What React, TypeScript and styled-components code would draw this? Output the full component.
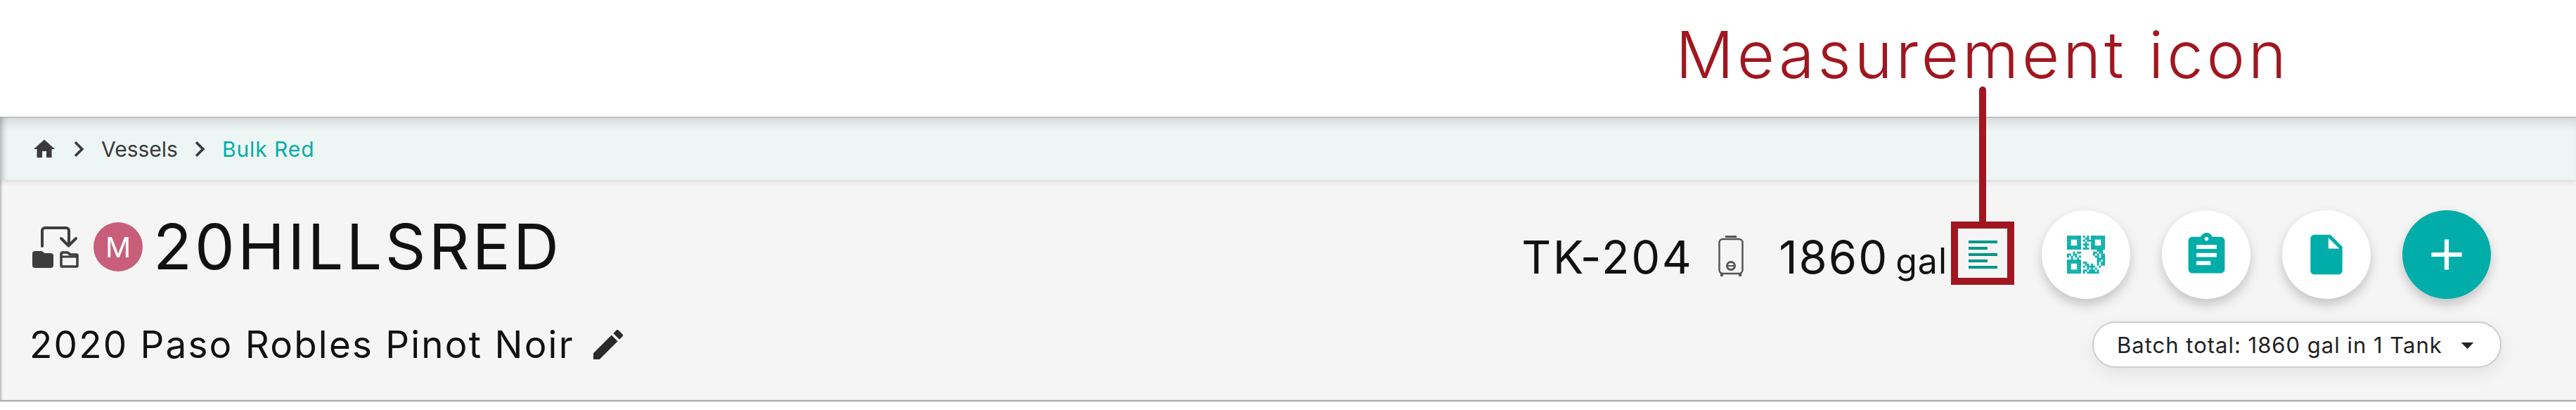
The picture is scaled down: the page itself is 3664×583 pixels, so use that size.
import styled, { createGlobalStyle } from "styled-components";
import {
  MdAdd,
  MdArrowDropDown,
  MdAssignment,
  MdChevronRight,
  MdEdit,
  MdHome,
  MdInsertDriveFile,
} from "react-icons/md";

const GlobalStyle = createGlobalStyle`
  html, body {
    margin: 0;
    background: #fff;
    font-family: Inter, "Open Sans", sans-serif;
  }
`;

const Page = styled.div`
  width: 3664px;
  height: 583px;
  padding-top: 166px;
  box-sizing: border-box;
  overflow: hidden;
`;

const Panel = styled.section`
  height: 405px;
  box-sizing: border-box;
  border-top: 1px solid #a8a8a8;
  border-bottom: 2px solid #a8a8a8;
  background: #f5f5f5;
  box-shadow: inset 3px 0 3px -1px rgba(0, 0, 0, 0.25);
`;

const Breadcrumb = styled.nav`
  height: 89px;
  display: flex;
  align-items: center;
  padding-left: 45px;
  background: #eef6f5;
  color: #3a3a3a;
  font-size: 30px;
  box-shadow: inset 0 16px 16px -10px rgba(0, 0, 0, 0.14), inset 9px 0 8px -6px rgba(0, 0, 0, 0.28),
    0 3px 6px rgba(0, 0, 0, 0.1);
`;

const Crumb = styled.span<{ $active?: boolean }>`
  color: ${(p) => (p.$active ? "#00ada8" : "#3a3a3a")};
  letter-spacing: ${(p) => (p.$active ? "0.9px" : "0")};
`;

const Chevron = styled(MdChevronRight)`
  width: 44px;
  height: 44px;
  margin: 0 10px 0 9px;
  color: #3a3a3a;
`;

const Head = styled.div`
  display: flex;
  justify-content: space-between;
  align-items: center;
  height: 126px;
  margin-top: 43px;
  padding: 0 121px 0 46px;
`;

const TitleGroup = styled.div`
  display: flex;
  align-items: center;
  margin-bottom: 22px;
`;

const Avatar = styled.div`
  width: 70px;
  height: 70px;
  margin: 0 15px 0 21px;
  border-radius: 50%;
  background: #c85e7a;
  color: #fff;
  font-size: 40px;
  display: flex;
  align-items: center;
  justify-content: center;
`;

const Title = styled.h1`
  margin: 0;
  font-size: 90px;
  font-weight: 400;
  line-height: 1;
  color: #111;
  letter-spacing: 4.2px;
`;

const ActionGroup = styled.div`
  display: flex;
  align-items: center;
`;

const Info = styled.div`
  display: flex;
  align-items: center;
  color: #111;
  margin-right: 63px;
`;

const TankName = styled.span`
  font-size: 65px;
  letter-spacing: 2.5px;
  line-height: 1;
  margin-top: 7px;
`;

const TankIcon = styled.svg`
  width: 36px;
  height: 60px;
  margin: 4px 50px 0 36px;
  color: #555;
`;

const Volume = styled.span`
  font-size: 65px;
  letter-spacing: 2px;
  line-height: 1;
  margin-top: 7px;
`;

const Unit = styled.span`
  font-size: 50px;
  letter-spacing: 1px;
  margin-left: 10px;
`;

const MeasureIcon = styled.svg`
  display: block;
  width: 41px;
  height: 40px;
`;

const MeasureWrap = styled.div`
  position: relative;
  margin-left: 30px;
  height: 40px;
`;

const CalloutBox = styled.div`
  position: absolute;
  left: -25px;
  top: -27px;
  width: 90px;
  height: 90px;
  box-sizing: border-box;
  border: 10px solid #a01720;

  &::before {
    content: "";
    position: absolute;
    left: 30px;
    top: -202px;
    width: 10px;
    height: 192px;
    background: #a01720;
    border-radius: 5px 5px 0 0;
  }
`;

const CalloutLabel = styled.div`
  position: absolute;
  left: 35px;
  top: -301px;
  transform: translateX(-50%);
  white-space: nowrap;
  color: #a01720;
  font-size: 92px;
  font-weight: 300;
  line-height: 107px;
  letter-spacing: 4.8px;
`;

const Buttons = styled.div`
  display: flex;
  gap: 45px;
`;

const RoundButton = styled.button<{ $primary?: boolean }>`
  width: 126px;
  height: 126px;
  padding: 0;
  border: 0;
  border-radius: 50%;
  display: flex;
  align-items: center;
  justify-content: center;
  color: ${(p) => (p.$primary ? "#fff" : "#00ada8")};
  background: ${(p) => (p.$primary ? "#00ada8" : "#fff")};
  box-shadow: 0 8px 16px rgba(0, 0, 0, 0.2);
`;

const Sub = styled.div`
  display: flex;
  justify-content: space-between;
  align-items: center;
  margin-top: 32px;
  padding: 0 106px 0 42px;
  height: 66px;
`;

const VintageRow = styled.div`
  display: flex;
  align-items: center;
  color: #111;
  font-size: 53px;
  letter-spacing: 2.2px;
`;

const EditIcon = styled(MdEdit)`
  width: 56px;
  height: 56px;
  margin-left: 20px;
  color: #2a2a2a;
`;

const BatchPill = styled.button`
  width: 582px;
  height: 66px;
  box-sizing: border-box;
  padding: 0 0 0 33px;
  display: flex;
  align-items: center;
  border: 2px solid #cdcdcd;
  border-radius: 33px;
  background: #fff;
  color: #222;
  font-family: inherit;
  font-size: 31px;
  letter-spacing: 1px;
  white-space: nowrap;
  box-shadow: 0 8px 24px rgba(0, 0, 0, 0.08);
`;

const Caret = styled(MdArrowDropDown)`
  width: 43px;
  height: 43px;
  margin-left: 14px;
`;

// 7 + 5 + 7 modules per row
const QR_ROWS = [
  "1111111" + ".1.1." + "1111111",
  "1111111" + "..11." + "1111111",
  "11...11" + ".1.11" + "11...11",
  "11...11" + "..1.." + "11...11",
  "11...11" + ".111." + "11...11",
  "1111111" + "..1.." + "1111111",
  "1111111" + ".111." + "1111111",
  "......." + "....." + "...111.",
  "...1.11" + "....." + ".11.11.",
  "11.11.." + "....." + ".1.1.11",
  "1.1.1.1" + "....." + "..11.11",
  "..1..1." + "....." + "...1111",
  "1111111" + "....." + "...11.1",
  "1111111" + ".11.." + "...1.11",
  "11...11" + "..11." + "1..1.11",
  "11...11" + ".1.11" + "11..1..",
  "11...11" + "...1." + "1.1....",
  "1111111" + ".11.1" + "11.1...",
  "1111111" + ".1.11" + "1111...",
];

function QrIcon() {
  return (
    <svg width="54" height="54" viewBox="0 0 19 19" fill="currentColor">
      {QR_ROWS.map((row, y) =>
        row.split("").map((c, x) => (c === "1" ? <rect key={`${x}-${y}`} x={x} y={y} width="1.02" height="1.02" /> : null)),
      )}
    </svg>
  );
}

function MoveFolderIcon() {
  return (
    <svg width="66" height="60" viewBox="0 0 66 60" fill="none" stroke="#3d3d3d" strokeWidth="4" strokeLinecap="round" strokeLinejoin="round">
      <path d="M14 29V7a4 4 0 0 1 4-4h30a4 4 0 0 1 4 4v20" />
      <path d="M41 18l10.500 10.500L62 18" />
      <path
        d="M2 40a2 2 0 0 1 2-2h9l4 3h9a2 2 0 0 1 2 2v13a2 2 0 0 1-2 2H4a2 2 0 0 1-2-2z"
        fill="#3d3d3d"
      />
      <path d="M41 40a2 2 0 0 1 2-2h7l4 3h9a1 1 0 0 1 1 1v15a1 1 0 0 1-1 1H42a1 1 0 0 1-1-1z" strokeWidth="3.500" />
      <path d="M41 44h23" strokeWidth="3" />
    </svg>
  );
}

function Tank() {
  return (
    <TankIcon viewBox="0 0 36 60" fill="none" stroke="currentColor" strokeWidth="2.500">
      <path d="M10 2.500h16" strokeWidth="3" />
      <rect x="1.500" y="6" width="33" height="49" rx="5" />
      <circle cx="18" cy="44" r="5.500" strokeWidth="3" />
      <path d="M13 44h10" strokeWidth="2" />
      <path d="M5 55v4M31 55v4" strokeWidth="4" />
    </TankIcon>
  );
}

const MEASURE_BARS = [41, 27, 41, 27, 41];

export default function App() {
  return (
    <Page>
      <GlobalStyle />
      <Panel>
        <Breadcrumb>
          <MdHome size={36} />
          <Chevron />
          <Crumb>Vessels</Crumb>
          <Chevron />
          <Crumb $active>Bulk Red</Crumb>
        </Breadcrumb>
        <Head>
          <TitleGroup>
            <MoveFolderIcon />
            <Avatar>M</Avatar>
            <Title>20HILLSRED</Title>
          </TitleGroup>
          <ActionGroup>
            <Info>
              <TankName>TK-204</TankName>
              <Tank />
              <Volume>
                1860<Unit>gal</Unit>
              </Volume>
              <MeasureWrap>
                <MeasureIcon viewBox="0 0 41 40" fill="#009688">
                  {MEASURE_BARS.map((w, i) => (
                    <rect key={i} x="0" y={i * 9} width={w} height="4" />
                  ))}
                </MeasureIcon>
                <CalloutBox>
                  <CalloutLabel>Measurement icon</CalloutLabel>
                </CalloutBox>
              </MeasureWrap>
            </Info>
            <Buttons>
              <RoundButton>
                <QrIcon />
              </RoundButton>
              <RoundButton>
                <MdAssignment size={69} />
              </RoundButton>
              <RoundButton>
                <MdInsertDriveFile size={68} />
              </RoundButton>
              <RoundButton $primary>
                <MdAdd size={74} />
              </RoundButton>
            </Buttons>
          </ActionGroup>
        </Head>
        <Sub>
          <VintageRow>
            2020 Paso Robles Pinot Noir
            <EditIcon />
          </VintageRow>
          <BatchPill>
            Batch total: 1860 gal in 1 Tank
            <Caret />
          </BatchPill>
        </Sub>
      </Panel>
    </Page>
  );
}
